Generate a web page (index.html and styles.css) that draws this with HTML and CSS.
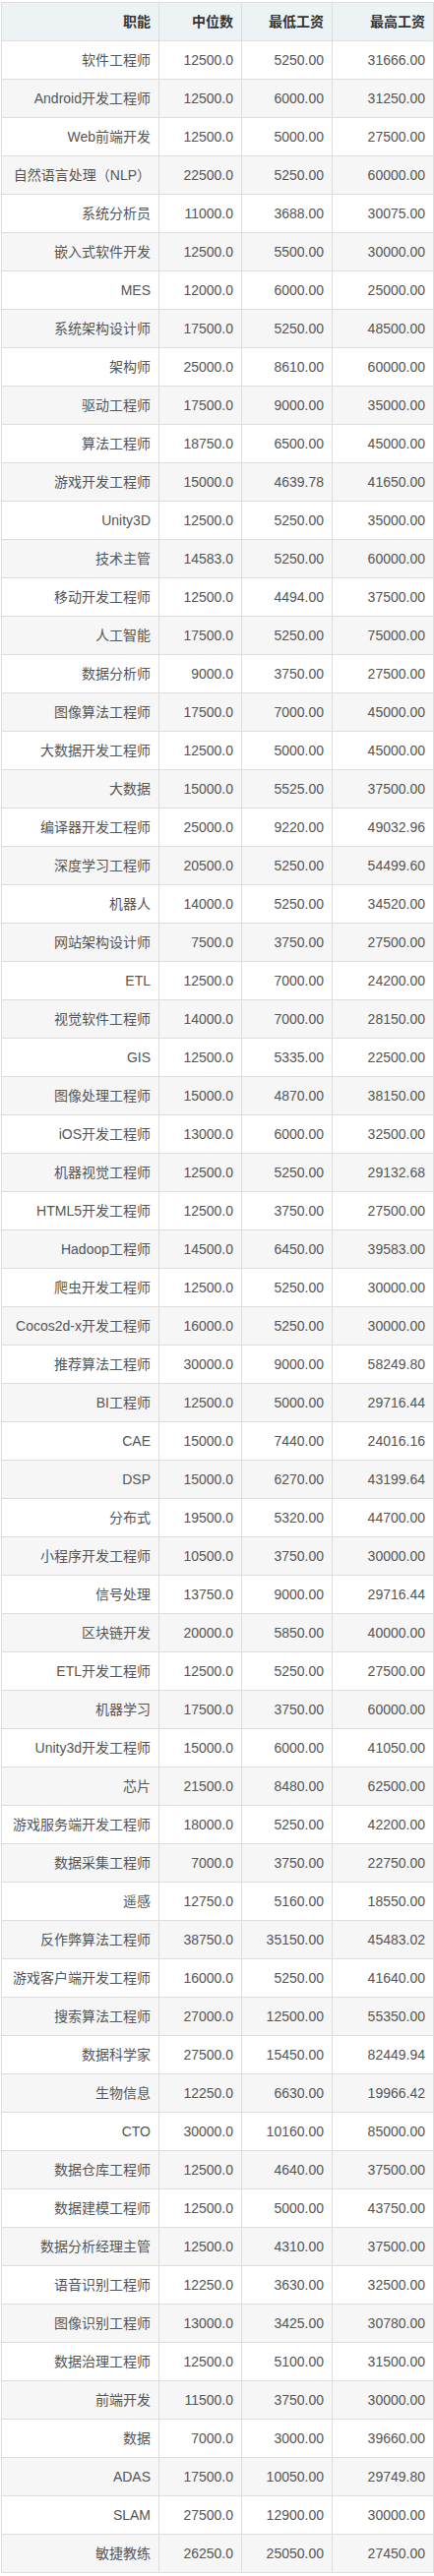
FILE: index.html
```html
<!DOCTYPE html>
<html lang="zh-CN">
<head>
<meta charset="utf-8">
<title>职能薪资</title>
<link rel="stylesheet" href="styles.css">
</head>
<body>
<table class="salary">
<colgroup><col class="c1"><col class="c2"><col class="c3"><col class="c4"></colgroup>
<thead>
<tr><th>职能</th><th>中位数</th><th>最低工资</th><th>最高工资</th></tr>
</thead>
<tbody>
<tr><td>软件工程师</td><td>12500.0</td><td>5250.00</td><td>31666.00</td></tr>
<tr><td>Android开发工程师</td><td>12500.0</td><td>6000.00</td><td>31250.00</td></tr>
<tr><td>Web前端开发</td><td>12500.0</td><td>5000.00</td><td>27500.00</td></tr>
<tr><td>自然语言处理（NLP）</td><td>22500.0</td><td>5250.00</td><td>60000.00</td></tr>
<tr><td>系统分析员</td><td>11000.0</td><td>3688.00</td><td>30075.00</td></tr>
<tr><td>嵌入式软件开发</td><td>12500.0</td><td>5500.00</td><td>30000.00</td></tr>
<tr><td>MES</td><td>12000.0</td><td>6000.00</td><td>25000.00</td></tr>
<tr><td>系统架构设计师</td><td>17500.0</td><td>5250.00</td><td>48500.00</td></tr>
<tr><td>架构师</td><td>25000.0</td><td>8610.00</td><td>60000.00</td></tr>
<tr><td>驱动工程师</td><td>17500.0</td><td>9000.00</td><td>35000.00</td></tr>
<tr><td>算法工程师</td><td>18750.0</td><td>6500.00</td><td>45000.00</td></tr>
<tr><td>游戏开发工程师</td><td>15000.0</td><td>4639.78</td><td>41650.00</td></tr>
<tr><td>Unity3D</td><td>12500.0</td><td>5250.00</td><td>35000.00</td></tr>
<tr><td>技术主管</td><td>14583.0</td><td>5250.00</td><td>60000.00</td></tr>
<tr><td>移动开发工程师</td><td>12500.0</td><td>4494.00</td><td>37500.00</td></tr>
<tr><td>人工智能</td><td>17500.0</td><td>5250.00</td><td>75000.00</td></tr>
<tr><td>数据分析师</td><td>9000.0</td><td>3750.00</td><td>27500.00</td></tr>
<tr><td>图像算法工程师</td><td>17500.0</td><td>7000.00</td><td>45000.00</td></tr>
<tr><td>大数据开发工程师</td><td>12500.0</td><td>5000.00</td><td>45000.00</td></tr>
<tr><td>大数据</td><td>15000.0</td><td>5525.00</td><td>37500.00</td></tr>
<tr><td>编译器开发工程师</td><td>25000.0</td><td>9220.00</td><td>49032.96</td></tr>
<tr><td>深度学习工程师</td><td>20500.0</td><td>5250.00</td><td>54499.60</td></tr>
<tr><td>机器人</td><td>14000.0</td><td>5250.00</td><td>34520.00</td></tr>
<tr><td>网站架构设计师</td><td>7500.0</td><td>3750.00</td><td>27500.00</td></tr>
<tr><td>ETL</td><td>12500.0</td><td>7000.00</td><td>24200.00</td></tr>
<tr><td>视觉软件工程师</td><td>14000.0</td><td>7000.00</td><td>28150.00</td></tr>
<tr><td>GIS</td><td>12500.0</td><td>5335.00</td><td>22500.00</td></tr>
<tr><td>图像处理工程师</td><td>15000.0</td><td>4870.00</td><td>38150.00</td></tr>
<tr><td>iOS开发工程师</td><td>13000.0</td><td>6000.00</td><td>32500.00</td></tr>
<tr><td>机器视觉工程师</td><td>12500.0</td><td>5250.00</td><td>29132.68</td></tr>
<tr><td>HTML5开发工程师</td><td>12500.0</td><td>3750.00</td><td>27500.00</td></tr>
<tr><td>Hadoop工程师</td><td>14500.0</td><td>6450.00</td><td>39583.00</td></tr>
<tr><td>爬虫开发工程师</td><td>12500.0</td><td>5250.00</td><td>30000.00</td></tr>
<tr><td>Cocos2d-x开发工程师</td><td>16000.0</td><td>5250.00</td><td>30000.00</td></tr>
<tr><td>推荐算法工程师</td><td>30000.0</td><td>9000.00</td><td>58249.80</td></tr>
<tr><td>BI工程师</td><td>12500.0</td><td>5000.00</td><td>29716.44</td></tr>
<tr><td>CAE</td><td>15000.0</td><td>7440.00</td><td>24016.16</td></tr>
<tr><td>DSP</td><td>15000.0</td><td>6270.00</td><td>43199.64</td></tr>
<tr><td>分布式</td><td>19500.0</td><td>5320.00</td><td>44700.00</td></tr>
<tr><td>小程序开发工程师</td><td>10500.0</td><td>3750.00</td><td>30000.00</td></tr>
<tr><td>信号处理</td><td>13750.0</td><td>9000.00</td><td>29716.44</td></tr>
<tr><td>区块链开发</td><td>20000.0</td><td>5850.00</td><td>40000.00</td></tr>
<tr><td>ETL开发工程师</td><td>12500.0</td><td>5250.00</td><td>27500.00</td></tr>
<tr><td>机器学习</td><td>17500.0</td><td>3750.00</td><td>60000.00</td></tr>
<tr><td>Unity3d开发工程师</td><td>15000.0</td><td>6000.00</td><td>41050.00</td></tr>
<tr><td>芯片</td><td>21500.0</td><td>8480.00</td><td>62500.00</td></tr>
<tr><td>游戏服务端开发工程师</td><td>18000.0</td><td>5250.00</td><td>42200.00</td></tr>
<tr><td>数据采集工程师</td><td>7000.0</td><td>3750.00</td><td>22750.00</td></tr>
<tr><td>遥感</td><td>12750.0</td><td>5160.00</td><td>18550.00</td></tr>
<tr><td>反作弊算法工程师</td><td>38750.0</td><td>35150.00</td><td>45483.02</td></tr>
<tr><td>游戏客户端开发工程师</td><td>16000.0</td><td>5250.00</td><td>41640.00</td></tr>
<tr><td>搜索算法工程师</td><td>27000.0</td><td>12500.00</td><td>55350.00</td></tr>
<tr><td>数据科学家</td><td>27500.0</td><td>15450.00</td><td>82449.94</td></tr>
<tr><td>生物信息</td><td>12250.0</td><td>6630.00</td><td>19966.42</td></tr>
<tr><td>CTO</td><td>30000.0</td><td>10160.00</td><td>85000.00</td></tr>
<tr><td>数据仓库工程师</td><td>12500.0</td><td>4640.00</td><td>37500.00</td></tr>
<tr><td>数据建模工程师</td><td>12500.0</td><td>5000.00</td><td>43750.00</td></tr>
<tr><td>数据分析经理主管</td><td>12500.0</td><td>4310.00</td><td>37500.00</td></tr>
<tr><td>语音识别工程师</td><td>12250.0</td><td>3630.00</td><td>32500.00</td></tr>
<tr><td>图像识别工程师</td><td>13000.0</td><td>3425.00</td><td>30780.00</td></tr>
<tr><td>数据治理工程师</td><td>12500.0</td><td>5100.00</td><td>31500.00</td></tr>
<tr><td>前端开发</td><td>11500.0</td><td>3750.00</td><td>30000.00</td></tr>
<tr><td>数据</td><td>7000.0</td><td>3000.00</td><td>39660.00</td></tr>
<tr><td>ADAS</td><td>17500.0</td><td>10050.00</td><td>29749.80</td></tr>
<tr><td>SLAM</td><td>27500.0</td><td>12900.00</td><td>30000.00</td></tr>
<tr><td>敏捷教练</td><td>26250.0</td><td>25050.00</td><td>27450.00</td></tr>
</tbody>
</table>
</body>
</html>
```

FILE: styles.css
```css
html, body {
  margin: 0;
  padding: 0;
  background: #ffffff;
}

body {
  padding: 2px 1px 0 1px;
  font-family: "Liberation Sans", Arial, "Noto Sans CJK SC", sans-serif;
  font-size: 14px;
  color: #555555;
}

.salary {
  border-collapse: collapse;
  table-layout: fixed;
  width: 439px;
}

.salary .c1 { width: 160px; }
.salary .c2 { width: 84px; }
.salary .c3 { width: 92px; }
.salary .c4 { width: 103px; }

.salary th,
.salary td {
  border: 1px solid #dddddd;
  text-align: right;
  padding: 9px 8px 9px 4px;
  line-height: 20px;
  height: 20px;
  white-space: nowrap;
  overflow: hidden;
}

.salary th {
  background: #edf2f5;
  color: #333333;
  font-weight: bold;
}

.salary tbody tr:nth-child(even) td {
  background: #f6f6f6;
}
```
